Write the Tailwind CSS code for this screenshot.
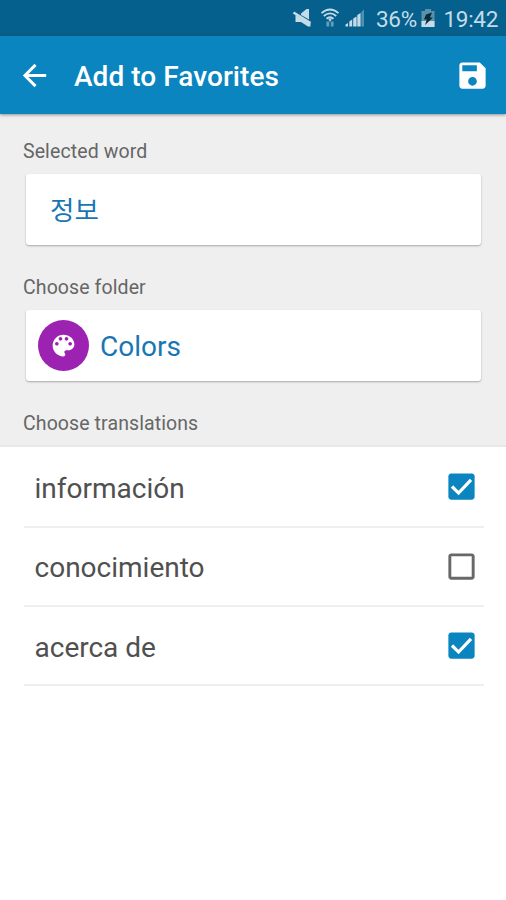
<!DOCTYPE html>
<html lang="en">
<head>
<meta charset="utf-8">
<title>Add to Favorites</title>
<script src="https://cdn.jsdelivr.net/npm/@tailwindcss/browser@4"></script>
</head>
<body class="bg-white">
<div class="flex h-[900px] w-[506px] flex-col overflow-hidden bg-white font-[Roboto,'Noto_Sans_CJK_KR',sans-serif] text-[#505050]">
  <div class="flex h-9 shrink-0 items-center bg-[#06608d] pr-2 pl-[292px] text-[#c3dce8]">
    <svg class="h-5 w-5 shrink-0" viewBox="0 0 20 20" fill="currentColor"><path d="M9 5.500 14.500 1H17v10.500L9 7zM3.500 7 18.500 15v3.500h-2.500L9 14H3.500z"/><path d="m1.500 4.500 17 10.500" stroke="currentColor" stroke-width="2.600"/></svg>
    <svg class="ml-2 h-5 w-5 shrink-0" viewBox="0 0 20 20" fill="none" stroke="currentColor" stroke-width="1.800"><path d="M1.500 5.100Q10-2 18.500 5.100"/><path d="M3.800 8Q10 2.800 16.200 8"/><path d="M6.500 10.700Q10 7.800 13.500 10.700"/><path d="m8 10.500 2 3.500 2-3.500z" fill="currentColor" stroke="none"/><path d="M7.800 13.500v5M12.200 13.500v5" stroke="#5f9fbf" stroke-width="2.800"/></svg>
    <svg class="ml-[5px] h-5 w-5 shrink-0" viewBox="0 0 20 20" fill="currentColor"><path d="M.5 18.500v-2L3 15v3.500zM4.300 18.500v-5l2.900-2v7zM8.200 18.500v-8l3.400-2v10zM12.300 18.500V7l3.300-2v13.500z"/><path d="M16.300 18.500V4L19 1.500v17z" fill="#4d92b3"/></svg>
    <span class="ml-[11px] w-[42px] shrink-0 pt-[2px] text-[22.5px] leading-[34px] tracking-[-0.3px] whitespace-nowrap">36%</span>
    <svg class="ml-[3px] h-5 w-[14px] shrink-0" viewBox="0 0 14 20"><path d="M4 1h6v2h3.500v16H.5V3H4z" fill="#5c91ab"/><path d="M.5 13h13v6H.5z" fill="#c3dce8"/><path d="M5 6.500 11 4.500 9 9.500h3L4 17l1.800-5.500H3z" fill="#082b3c"/></svg>
    <span class="ml-auto shrink-0 pt-[2px] text-[22.5px] leading-[34px] tracking-[-0.3px] whitespace-nowrap">19:42</span>
  </div>
  <header class="relative z-10 flex h-[78px] shrink-0 items-center bg-[#0a85c0] pr-4 pl-[17px] text-white shadow-[0_1px_3px_rgba(0,0,0,0.4)]">
    <svg class="h-[35px] w-[35px]" viewBox="0 0 24 24" fill="currentColor"><path d="M20 11H7.830l5.590-5.590L12 4l-8 8 8 8 1.410-1.410L7.830 13H20z"/></svg>
    <h1 class="ml-[22px] pt-[4px] text-[28px] leading-8 font-medium tracking-[0.05px] whitespace-nowrap">Add to Favorites</h1>
    <svg class="ml-auto h-[35px] w-[35px]" viewBox="0 0 24 24" fill="currentColor"><path d="M17 3H5c-1.110 0-2 .9-2 2v14c0 1.100.89 2 2 2h14c1.100 0 2-.9 2-2V7l-4-4zm-5 16c-1.660 0-3-1.340-3-3s1.340-3 3-3 3 1.340 3 3-1.340 3-3 3zm3-10H5V5h10v4z"/></svg>
  </header>
  <main class="flex h-[333px] shrink-0 flex-col border-b-2 border-[#e8e8e8] bg-[#efefef] px-[26px] pt-[26px]">
    <h2 class="-ml-[3px] h-[34px] text-[19.5px] leading-6 tracking-[0.1px] text-[#666]">Selected word</h2>
    <div class="flex h-[71px] w-[455px] items-center rounded-[3px] bg-white pl-6 text-[26.5px] text-[#1976b5] shadow-[0_1px_2px_rgba(0,0,0,0.3)]"><span class="pt-[2px]">정보</span></div>
    <h2 class="mt-[31px] -ml-[3px] h-[34px] text-[19.5px] leading-6 tracking-[0.1px] text-[#666]">Choose folder</h2>
    <div class="flex h-[71px] w-[455px] items-center rounded-[3px] bg-white pl-3 text-[28px] text-[#1976b5] shadow-[0_1px_2px_rgba(0,0,0,0.3)]">
      <span class="flex h-[51px] w-[51px] items-center justify-center rounded-full bg-[#9c23b2] text-white"><svg class="h-[29px] w-[29px]" viewBox="0 0 24 24" fill="currentColor"><path d="M12 3c-4.970 0-9 4.030-9 9s4.030 9 9 9c.83 0 1.500-.67 1.500-1.500 0-.39-.15-.74-.39-1.010-.23-.26-.38-.61-.38-.99 0-.83.67-1.500 1.500-1.500H16c2.760 0 5-2.240 5-5 0-4.420-4.030-8-9-8zm-5.500 9c-.83 0-1.500-.67-1.500-1.500S5.670 9 6.500 9 8 9.670 8 10.500 7.330 12 6.500 12zm3-4C8.670 8 8 7.330 8 6.500S8.670 5 9.500 5s1.500.67 1.500 1.500S10.330 8 9.500 8zm5 0c-.83 0-1.500-.67-1.500-1.500S13.670 5 14.500 5s1.500.67 1.500 1.500S15.330 8 14.500 8zm3 4c-.83 0-1.500-.67-1.500-1.500S16.670 9 17.500 9s1.500.67 1.500 1.500-.67 1.500-1.500 1.500z"/></svg></span>
      <span class="ml-[11px] pt-[2px]">Colors</span>
    </div>
    <h2 class="mt-[31px] -ml-[3px] text-[19.5px] leading-6 tracking-[0.1px] text-[#666]">Choose translations</h2>
  </main>
  <ul class="mr-[22px] ml-6 text-[28px]">
    <li class="flex h-[81px] items-center justify-between border-b-2 border-[#efefef] pr-[5px] pl-[10.5px]"><span class="pt-[4px]">información</span><svg class="h-[35px] w-[35px]" viewBox="0 0 24 24"><path fill="#0a85c0" d="M19 3H5c-1.110 0-2 .9-2 2v14c0 1.100.89 2 2 2h14c1.110 0 2-.9 2-2V5c0-1.100-.89-2-2-2z"/><path d="m5.500 12 4.500 4.500L18.500 7.500" fill="none" stroke="white" stroke-width="2.200"/></svg></li>
    <li class="flex h-[79px] items-center justify-between border-b-2 border-[#efefef] pr-[5px] pl-[10.5px]"><span class="pt-[3px]">conocimiento</span><svg class="h-[35px] w-[35px]" viewBox="0 0 24 24"><path fill="#686868" d="M19 5v14H5V5h14m0-2H5c-1.100 0-2 .9-2 2v14c0 1.100.9 2 2 2h14c1.100 0 2-.9 2-2V5c0-1.100-.9-2-2-2z"/></svg></li>
    <li class="flex h-[79px] items-center justify-between border-b-2 border-[#efefef] pr-[5px] pl-[10.5px]"><span class="pt-[4px]">acerca de</span><svg class="h-[35px] w-[35px]" viewBox="0 0 24 24"><path fill="#0a85c0" d="M19 3H5c-1.110 0-2 .9-2 2v14c0 1.100.89 2 2 2h14c1.110 0 2-.9 2-2V5c0-1.100-.89-2-2-2z"/><path d="m5.500 12 4.500 4.500L18.500 7.500" fill="none" stroke="white" stroke-width="2.200"/></svg></li>
  </ul>
</div>
</body>
</html>
